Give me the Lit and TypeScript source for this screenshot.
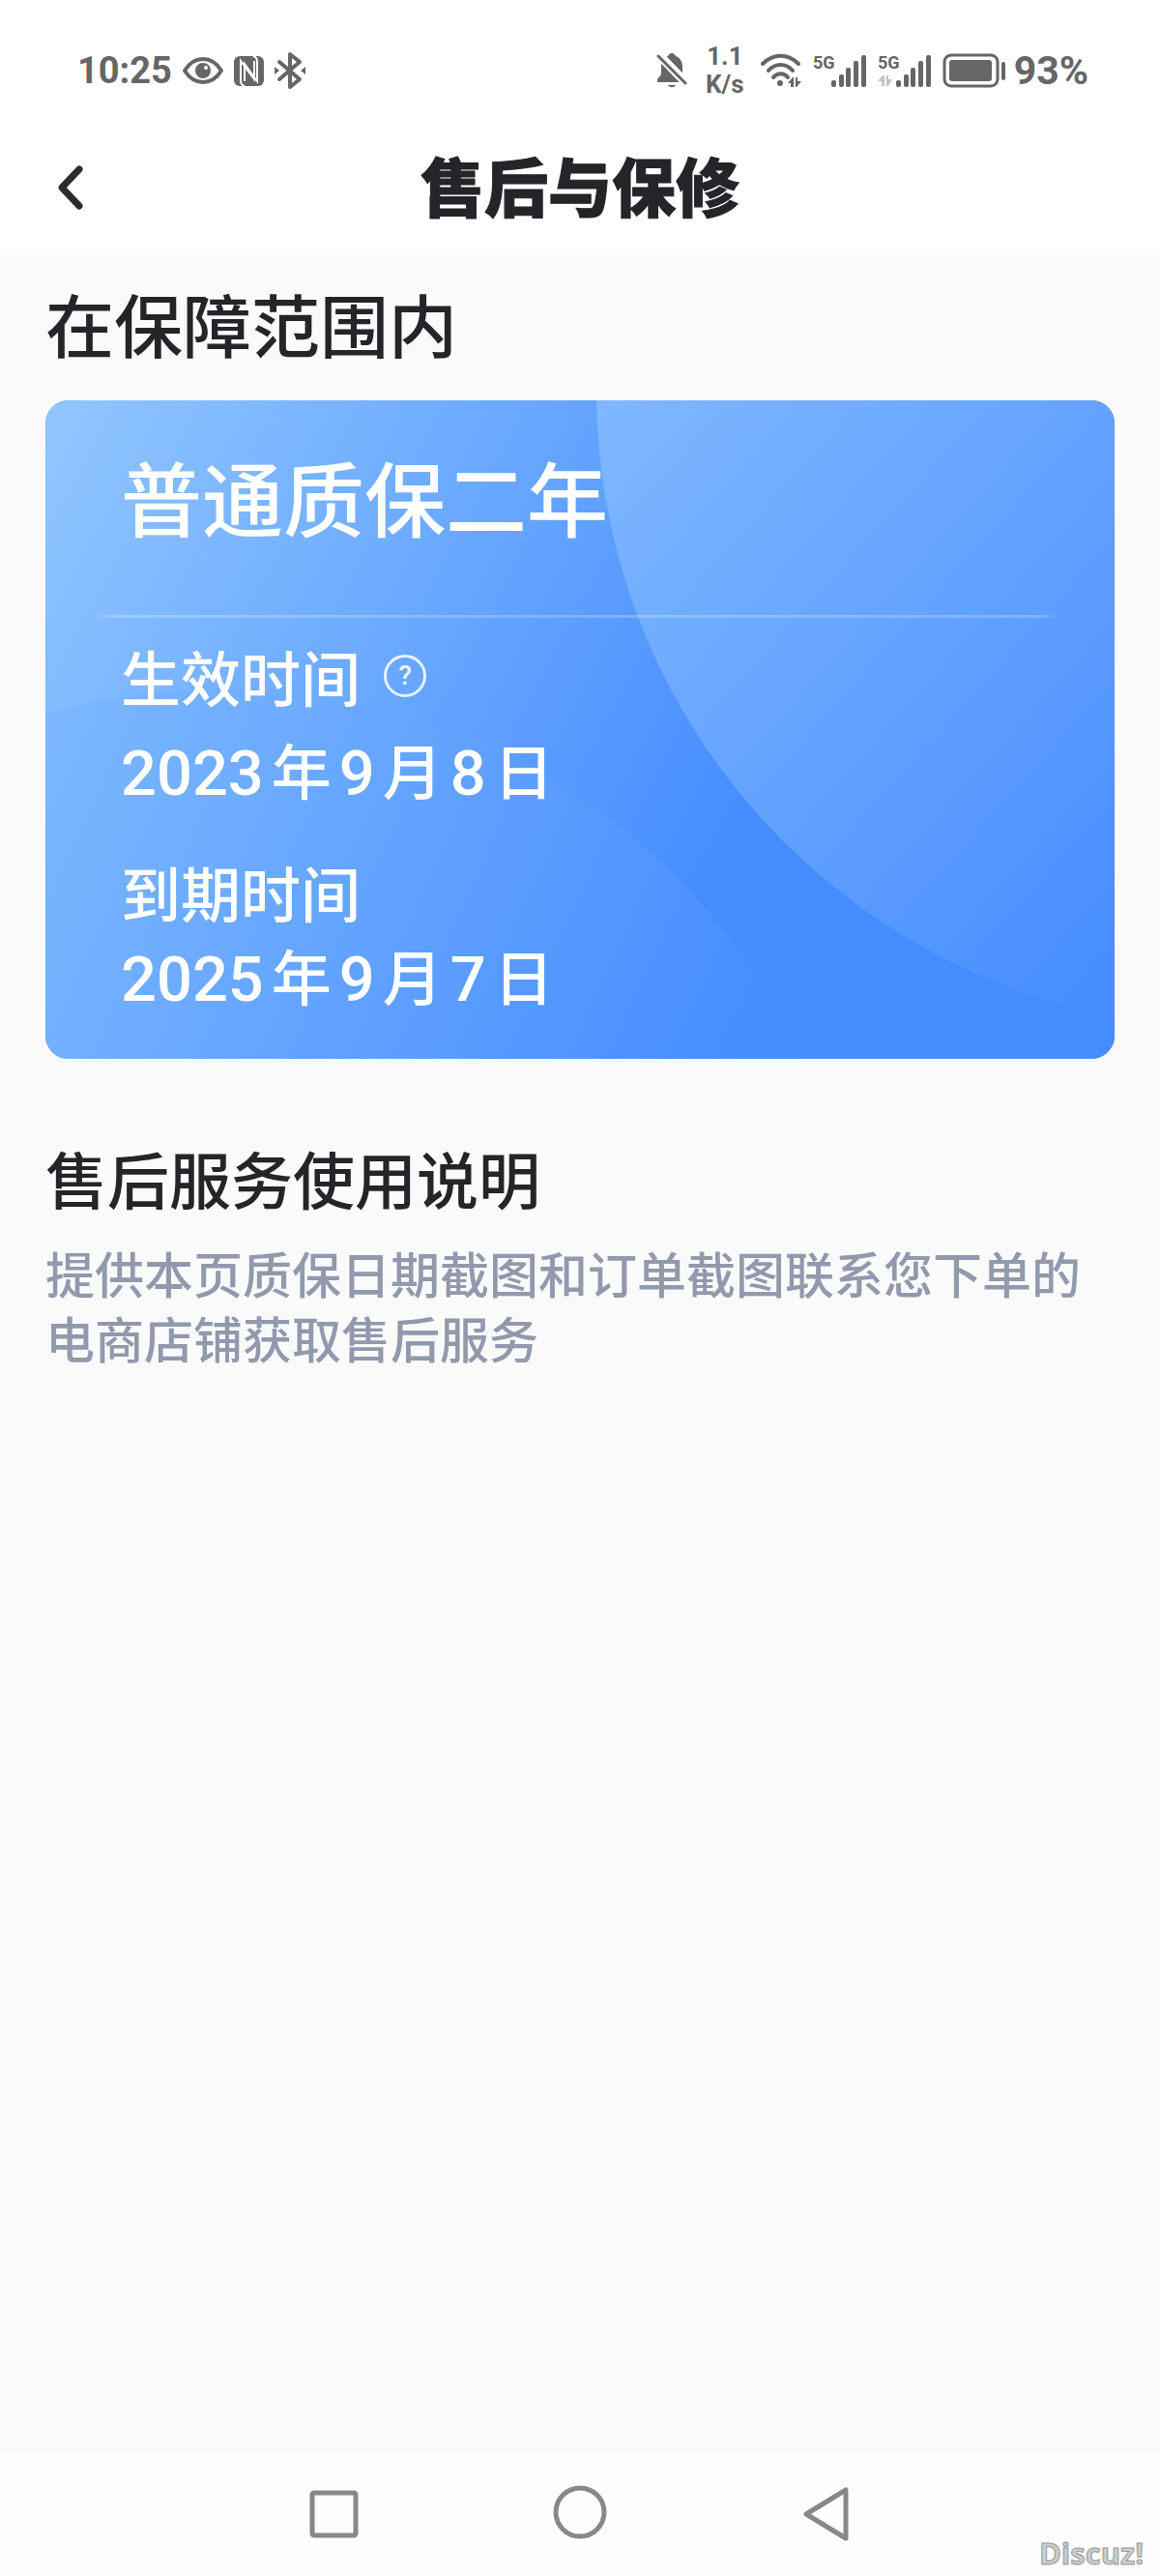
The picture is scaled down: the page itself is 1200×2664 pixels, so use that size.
import { LitElement, html, svg, css } from "lit";
import { customElement, property } from "lit/decorators.js";

interface Period {
  label: string;
  date: string;
  hint?: boolean;
}

const PERIODS: Period[] = [
  { label: "生效时间", date: "2023年9月8日", hint: true },
  { label: "到期时间", date: "2025年9月7日" },
];

@customElement("signal-meter")
export class SignalMeter extends LitElement {
  @property({ type: Boolean }) idle = false;

  static styles = css`
    :host {
      display: block;
    }
    .meter {
      display: block;
      overflow: visible;
      fill: #666;
      font: 700 18px "Roboto", sans-serif;
    }
    .arrows {
      fill: #c4c4c4;
    }
  `;

  render() {
    return html`
      <svg class="meter" width="55" height="36" viewBox="0 0 55 36" role="img" aria-label="5G">
        <text x="0" y="16">5G</text>
        ${this.idle
          ? svg`<path class="arrows" d="M0 29 5 23h2v11H4v-5zM9 23h2v4h4l-4 7H9z" />`
          : null}
        <rect x="19" y="28" width="5" height="7" rx="2" />
        <rect x="27" y="22" width="5" height="13" rx="2" />
        <rect x="34" y="15" width="5" height="20" rx="2" />
        <rect x="42" y="8" width="5" height="27" rx="2" />
        <rect x="50" y="2" width="5" height="33" rx="2" />
      </svg>
    `;
  }
}

@customElement("status-bar")
export class StatusBar extends LitElement {
  static styles = css`
    :host {
      display: flex;
      justify-content: space-between;
      align-items: center;
      box-sizing: border-box;
      height: 124px;
      padding: 22px 74px 0 80px;
      color: #666;
      font: 700 38px/44px "Roboto", sans-serif;
    }
    .group {
      display: flex;
      align-items: center;
      gap: 12px;
    }
    .group:first-child {
      gap: 11px;
    }
    .rate {
      font-size: 26px;
      line-height: 29px;
      text-align: center;
      padding: 0 5px 0 7px;
    }
    .icon {
      display: block;
      fill: #666;
    }
    .line {
      fill: none;
      stroke: #666;
      stroke-linecap: round;
      stroke-linejoin: round;
    }
    .cut {
      fill: none;
      stroke: #fff;
    }
    .paper {
      fill: #fff;
    }
    .battery {
      display: flex;
      align-items: center;
      gap: 8px;
      font-size: 41px;
    }
  `;

  render() {
    return html`
      <div class="group">
        <time>10:25</time>
        <svg class="icon" width="42" height="28" viewBox="0 0 42 28" aria-hidden="true">
          <path class="line" stroke-width="4" d="M2 14C12-2 30-2 40 14C30 30 12 30 2 14Z" />
          <circle cx="21" cy="14" r="8" />
          <circle class="paper" cx="24" cy="11" r="2" />
        </svg>
        <svg class="icon" width="31" height="31" viewBox="0 0 31 31" aria-hidden="true">
          <rect width="31" height="31" rx="6" />
          <path class="cut" stroke-width="2" d="M11 31c-3-1-4-2-4-5V5l14 19V5" />
          <path class="cut" stroke-width="2" d="M20 0c3 1 4 2 4 5v21L11 8v18" />
        </svg>
        <svg class="icon" width="32" height="40" viewBox="0 0 32 40" aria-hidden="true">
          <path class="line" stroke-width="4" d="M5 11l21 18-10 8V3l10 8L5 29" />
          <path d="M0 16l5 4-5 4zM32 16l-5 4 5 4z" />
        </svg>
      </div>
      <div class="group">
        <svg class="icon" width="32" height="38" viewBox="0 0 32 38" aria-hidden="true">
          <path d="M16 1c2 0 3 1 4 3 5 2 7 6 7 11v8l4 6v2H1v-3l4-5v-8C5 9 7 6 12 4c1-2 2-3 4-3zM12 34h8c-1 3-7 3-8 0z" />
          <path class="cut" stroke-width="9" d="M1 1l31 32" />
          <path class="line" stroke-width="3" d="M2 4l28 28" />
        </svg>
        <div class="rate">1.1<br />K/s</div>
        <svg class="icon" width="42" height="36" viewBox="0 0 42 36" aria-hidden="true">
          <path class="line" stroke-width="4" d="M2 11c11-11 26-11 37 0M8 18c7-8 18-8 25 0M13 25c4-5 11-5 15 0" />
          <circle cx="20" cy="31" r="3" />
          <path d="M28 31l5-6h1v10h-3v-4zM36 25h2v4h4l-5 6h-1z" />
        </svg>
        <signal-meter></signal-meter>
        <signal-meter idle></signal-meter>
        <div class="battery">
          <svg class="icon" width="66" height="36" viewBox="0 0 66 36" aria-hidden="true">
            <rect class="line" stroke-width="3" x="2" y="2" width="55" height="32" rx="7" />
            <rect x="7" y="7" width="44" height="22" rx="3" />
            <rect x="61" y="9" width="4" height="19" rx="2" />
          </svg>
          <span>93%</span>
        </div>
      </div>
    `;
  }
}

@customElement("warranty-card")
export class WarrantyCard extends LitElement {
  static styles = css`
    :host {
      display: block;
      position: relative;
      overflow: hidden;
      border-radius: 24px;
      background: #448cff;
      color: #fff;
    }
    .art {
      position: absolute;
      inset: 0;
      width: 100%;
      height: 100%;
    }
    .body {
      position: relative;
      padding: 53px 50px 46px;
    }
    .name,
    .label,
    .date {
      margin: 0 28px;
      font-weight: 500;
    }
    .name {
      font-size: 84px;
      line-height: 92px;
    }
    .rule {
      height: 3px;
      margin: 77px 8px 24px 0;
      border: 0;
      background: linear-gradient(90deg, #ffffff00, #ffffff38 2%, #ffffff38 98%, #ffffff00);
    }
    .periods {
      margin: 0;
    }
    .period + .period {
      margin-top: 50px;
    }
    .label {
      display: flex;
      align-items: center;
      gap: 24px;
      font-size: 62px;
      line-height: 72px;
    }
    .date {
      font-size: 62px;
      line-height: 72px;
    }
    .period:first-child .date {
      margin-top: 24px;
    }
    .period + .period .date {
      margin-top: 14px;
    }
    .number {
      margin-right: 8px;
      font-family: "Roboto", sans-serif;
      font-weight: 500;
      font-size: 65px;
    }
    .number + .number {
      margin-left: 8px;
    }
    .hint {
      width: 44px;
      height: 44px;
      padding: 0;
      border: 3px solid #ffffffd9;
      border-radius: 50%;
      background: none;
      color: #ffffffe6;
      font: 500 28px/36px "Roboto", sans-serif;
    }
  `;

  private dateText(date: string) {
    return date
      .split(/(\d+)/)
      .filter(Boolean)
      .map((part) => (/\d/.test(part) ? html`<span class="number">${part}</span>` : part));
  }

  render() {
    return html`
      <svg class="art" viewBox="0 0 1106 683" preserveAspectRatio="none" aria-hidden="true">
        <defs>
          <linearGradient id="base" gradientUnits="userSpaceOnUse" x1="0" y1="0" x2="760" y2="400">
            <stop offset="0" stop-color="#91c6ff" />
            <stop offset="1" stop-color="#448cff" />
          </linearGradient>
          <linearGradient id="low" gradientUnits="userSpaceOnUse" x1="0" y1="300" x2="740" y2="640">
            <stop offset="0" stop-color="#7db8ff" />
            <stop offset="1" stop-color="#468dff" />
          </linearGradient>
          <linearGradient id="high" gradientUnits="userSpaceOnUse" x1="570" y1="0" x2="1150" y2="520">
            <stop offset="0" stop-color="#80b8ff" />
            <stop offset="1" stop-color="#488eff" />
          </linearGradient>
        </defs>
        <rect width="1106" height="683" fill="url(#base)" />
        <circle cx="183" cy="961" r="662" fill="url(#low)" />
        <circle cx="1232" cy="-10" r="662" fill="url(#high)" />
      </svg>
      <div class="body">
        <h2 class="name">普通质保二年</h2>
        <hr class="rule" />
        <dl class="periods">
          ${PERIODS.map(
            (p) => html`
              <div class="period">
                <dt class="label">
                  ${p.label}
                  ${p.hint ? html`<button class="hint" type="button">?</button>` : null}
                </dt>
                <dd class="date">${this.dateText(p.date)}</dd>
              </div>
            `,
          )}
        </dl>
      </div>
    `;
  }
}

@customElement("app-root")
export class AppRoot extends LitElement {
  static styles = css`
    :host {
      display: flex;
      flex-direction: column;
      position: relative;
      min-height: 100vh;
      background: #fafafa;
      color: #242529;
      font-family: "Noto Sans CJK SC", sans-serif;
    }
    .top {
      background: #fff;
    }
    .bar {
      display: grid;
      grid-template-columns: 72px 1fr 72px;
      align-items: center;
      height: 140px;
      padding: 0 36px;
    }
    .back,
    .key {
      display: grid;
      place-items: center;
      padding: 0;
      border: 0;
      background: none;
    }
    .back {
      height: 72px;
    }
    .title {
      margin: 0;
      padding-bottom: 8px;
      font-size: 66px;
      line-height: 76px;
      font-weight: 900;
      text-align: center;
      -webkit-text-stroke: 1px #242529;
    }
    .heading,
    .subheading {
      font-weight: 500;
    }
    .content {
      flex: 1;
      padding: 27px 47px;
    }
    .heading {
      margin: 0 0 39px;
      font-size: 71px;
      line-height: 84px;
    }
    .subheading {
      margin: 84px 0 28px;
      font-size: 64px;
      line-height: 76px;
    }
    .note {
      margin: 0;
      color: #9299ad;
      font-size: 51px;
      line-height: 67px;
      font-weight: 500;
    }
    .keys {
      display: flex;
      justify-content: center;
      align-items: center;
      gap: 200px;
      height: 127px;
      background: #fdfdfd;
    }
    .stroke {
      display: block;
      fill: none;
      stroke: #888;
      stroke-width: 5;
      stroke-linejoin: round;
      stroke-linecap: round;
      overflow: visible;
    }
    .dark {
      stroke: #2b2c2e;
      stroke-width: 7;
    }
    .mark {
      position: absolute;
      right: 17px;
      bottom: 6px;
      color: #ccc;
      font: 700 31px/36px "Open Sans", sans-serif;
      -webkit-text-stroke: 1px #999;
    }
  `;

  render() {
    return html`
      <header class="top">
        <status-bar></status-bar>
        <div class="bar">
          <button class="back" type="button" aria-label="返回">
            <svg class="stroke dark" width="30" height="48" viewBox="0 0 30 48">
              <path d="M25 5L7 24l18 19" />
            </svg>
          </button>
          <h1 class="title">售后与保修</h1>
        </div>
      </header>
      <main class="content">
        <h2 class="heading">在保障范围内</h2>
        <warranty-card></warranty-card>
        <h2 class="subheading">售后服务使用说明</h2>
        <p class="note">提供本页质保日期截图和订单截图联系您下单的电商店铺获取售后服务</p>
      </main>
      <nav class="keys">
        <button class="key" type="button" aria-label="最近任务">
          <svg class="stroke" width="55" height="55" viewBox="0 0 55 55">
            <rect x="5" y="5" width="45" height="44" rx="2" />
          </svg>
        </button>
        <button class="key" type="button" aria-label="主页">
          <svg class="stroke" width="55" height="55" viewBox="0 0 55 55">
            <circle cx="27" cy="25" r="25" />
          </svg>
        </button>
        <button class="key" type="button" aria-label="返回上一级">
          <svg class="stroke" width="55" height="55" viewBox="0 0 55 55">
            <path d="M47 2v50L6 27z" />
          </svg>
        </button>
      </nav>
      <span class="mark">Discuz!</span>
    `;
  }
}
